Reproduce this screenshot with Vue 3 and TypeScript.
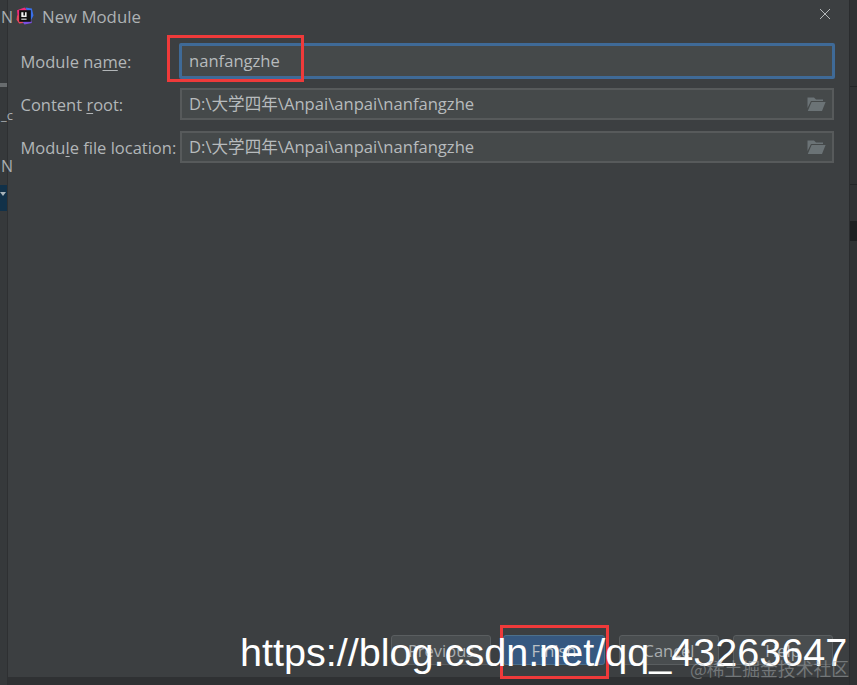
<script setup lang="ts">
interface Row { label: string; before: string; key: string; after: string; value: string; focus: boolean; browse: boolean }
const rows: Row[] = [
  { label: 'name', before: 'Module na', key: 'm', after: 'e:', value: 'nanfangzhe', focus: true, browse: false },
  { label: 'root', before: 'Content ', key: 'r', after: 'oot:', value: 'D:\\大学四年\\Anpai\\anpai\\nanfangzhe', focus: false, browse: true },
  { label: 'file', before: 'Modu', key: 'l', after: 'e file location:', value: 'D:\\大学四年\\Anpai\\anpai\\nanfangzhe', focus: false, browse: true },
]
const buttons = ['Previous', 'Finish', 'Cancel', 'Help']
</script>

<template>
  <div class="screen">
    <aside class="side-left">
      <span class="peek peek-n1">N</span>
      <span class="peek-bar"></span>
      <span class="peek peek-c">_c</span>
      <span class="peek peek-n2">N</span>
      <span class="peek-sel"><i></i></span>
    </aside>

    <main class="dialog">
      <header class="title">
        <svg class="logo" width="18" height="18" viewBox="0 0 17 17">
          <path d="M1 3 L8 0.5 L11 3 L7 8 L1.5 9 Z" fill="#f0297a" />
          <path d="M9 0.5 L15 1.5 L16.5 8 L14 13 L11 5 Z" fill="#3a6fe8" />
          <path d="M1 8 L6 7 L7 15 L3 15.5 L0.5 12 Z" fill="#e8455e" />
          <path d="M6 14 L14 11 L15 15 L8 16.5 Z" fill="#7a4fe0" />
          <rect x="3" y="3" width="11" height="11" fill="#111" />
          <rect x="5" y="11" width="5" height="1" fill="#eee" />
          <path d="M5 5h2v3h1.5V5H10v4.5H5z" fill="#eee" />
        </svg>
        <span class="title-text">New Module</span>
        <svg class="close" width="12" height="12" viewBox="0 0 12 12">
          <path d="M1 1 L11 11 M11 1 L1 11" stroke="#b4b8ba" stroke-width="1" fill="none" />
        </svg>
      </header>

      <section class="form">
        <div v-for="r in rows" :key="r.label" class="row">
          <label class="label">{{ r.before }}<u>{{ r.key }}</u>{{ r.after }}</label>
          <div class="field" :class="{ focus: r.focus }">
            <span class="value">{{ r.value }}</span>
            <svg v-if="r.browse" class="folder" width="19" height="15" viewBox="0 0 19 15">
              <path d="M0.5 0.5 H7 L9 2.5 H16 V4 H4 L0.5 11 Z" fill="#6b7376" />
              <path d="M4.6 5 H18.6 L15 14 H0.8 Z" fill="#6b7376" />
            </svg>
          </div>
        </div>
      </section>

      <footer class="actions">
        <button v-for="b in buttons" :key="b" class="btn" :class="{ primary: b === 'Finish' }" type="button">{{ b }}</button>
      </footer>
    </main>

    <aside class="side-right">
      <span class="tick tick-a"></span>
      <span class="tick tick-b"></span>
      <span class="tick-block"></span>
    </aside>

    <div class="mark mark-name"></div>
    <div class="mark mark-finish"></div>
    <div class="wm-url">https://blog.csdn.net/qq_43263647</div>
    <div class="wm-site">@稀土掘金技术社区</div>
  </div>
</template>

<style scoped>
.screen {
  position: relative;
  display: flex;
  width: 857px;
  height: 685px;
  overflow: hidden;
  background: #2f3133;
  font-family: "Open Sans", "Noto Sans CJK SC", sans-serif;
  color: #b6babc;
}
.side-left {
  position: relative;
  flex: 0 0 8px;
  background: #36393b;
  border-right: 1px solid #2e3032;
  box-sizing: border-box;
}
.peek { position: absolute; left: 1px; font-size: 16px; line-height: 18px; color: #a8adb0; }
.peek-n1 { top: 8px; }
.peek-c { top: 106px; font-size: 13px; }
.peek-n2 { top: 157px; }
.peek-bar { position: absolute; left: 0; top: 83px; width: 7px; height: 4px; background: #686c6e; }
.peek-sel { position: absolute; left: 0; top: 185px; width: 7px; height: 26px; background: #113149; }
.peek-sel i { position: absolute; left: 0; top: 7px; border-left: 3px solid transparent; border-right: 3px solid transparent; border-top: 4px solid #a9b4ba; }
.dialog {
  flex: 0 0 841px;
  height: 677px;
  display: flex;
  flex-direction: column;
  background: #3c3f41;
}
.title {
  display: flex;
  align-items: center;
  height: 34px;
  padding: 0 18px 2px 8px;
  box-sizing: border-box;
}
.logo { flex: none; }
.title-text { margin-left: 8px; font-size: 16.8px; color: #aeb2b4; }
.close { margin-left: auto; margin-top: -4px; }
.form {
  display: flex;
  flex-direction: column;
  gap: 11px;
  padding: 11px 15px 0 12.5px;
}
.row { display: flex; align-items: center; height: 32px; }
.label {
  flex: 0 0 159.5px;
  font-size: 16.5px;
  line-height: 20px;
  padding-top: 2px;
  color: #b2b6b8;
  white-space: nowrap;
}
.label u { text-underline-offset: 2px; }
.field {
  flex: 1;
  height: 32px;
  box-sizing: border-box;
  display: flex;
  align-items: center;
  padding: 0 6px 2px 7px;
  background: #45494a;
  border: 2px solid #575a5b;
}
.field.focus {
  height: 36px;
  margin: 0 -1px;
  padding-left: 7px;
  border: 3px solid #3f6a97;
  border-radius: 2px;
  background: #45494a;
}
.value { font-size: 16.6px; color: #b7bbbd; white-space: nowrap; }
.folder { margin-left: auto; margin-top: 2px; }
.actions {
  margin-top: auto;
  display: flex;
  justify-content: flex-end;
  gap: 14px;
  padding: 0 16px 12px 0;
}
.btn {
  width: 100px;
  height: 30px;
  padding: 0;
  font: inherit;
  font-size: 16.5px;
  color: #a9adaf;
  background: #494d4f;
  border: 1px solid #5a5e60;
  border-radius: 3px;
}
.btn.primary {
  width: 102px;
  margin-left: -2px;
  background: #365880;
  border-color: #4c708c;
  color: #bbc0c4;
}
.side-right {
  position: relative;
  flex: 0 0 8px;
  background: #303234;
  border-left: 1px solid #2a2c2e;
  box-sizing: border-box;
}
.tick { position: absolute; left: 0; width: 8px; height: 1px; background: #232527; }
.tick-a { top: 86px; }
.tick-b { top: 184px; }
.tick-block { position: absolute; left: 0; top: 221px; width: 7px; height: 20px; background: #1e2022; }
.mark {
  position: absolute;
  box-sizing: border-box;
  border: 3px solid #ef3a3a;
}
.mark-name { left: 167px; top: 35px; width: 137px; height: 47px; }
.mark-finish { left: 500px; top: 625px; width: 109px; height: 54px; }
.wm-url {
  position: absolute;
  left: 240px;
  top: 626px;
  font-family: "Liberation Sans", sans-serif;
  font-size: 39.6px;
  line-height: 52px;
  color: #fff;
  white-space: nowrap;
}
.wm-site {
  position: absolute;
  right: 8px;
  top: 658px;
  font-family: "Noto Sans CJK SC", sans-serif;
  font-size: 17.8px;
  line-height: 20px;
  color: rgba(170, 175, 178, 0.5);
  white-space: nowrap;
}
</style>
